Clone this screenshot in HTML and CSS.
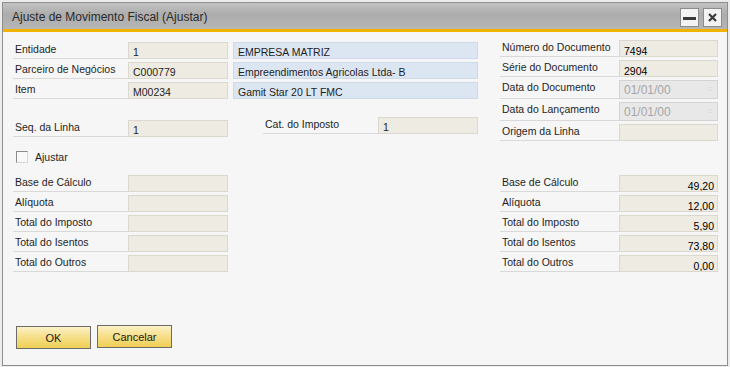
FILE: index.html
```html
<!DOCTYPE html>
<html lang="pt">
<head>
    <meta charset="UTF-8">
    <meta name="viewport" content="width=device-width, initial-scale=1.0">
    <title>Ajuste de Movimento Fiscal (Ajustar)</title>
    <link rel="stylesheet" href="styles.css">
</head>
<body>
    <div class="window">
        <div class="titlebar">
            <span class="title">Ajuste de Movimento Fiscal (Ajustar)</span>
            <div class="title-buttons">
                <button class="tbtn" title="Minimizar">
                    <svg width="17" height="17" viewBox="0 0 17 17"><rect x="2" y="8" width="13" height="3" fill="#3a3a3a"/></svg>
                </button>
                <button class="tbtn" title="Fechar">
                    <svg width="17" height="17" viewBox="0 0 17 17"><path d="M5 5 L12 12 M12 5 L5 12" stroke="#3a3a3a" stroke-width="2.2"/></svg>
                </button>
            </div>
        </div>

        <div class="content">
            <div class="top">
                <div class="col-left">
                    <div class="row">
                        <span class="lbl">Entidade</span>
                        <div class="fld">1</div>
                        <div class="fld wide blue">EMPRESA MATRIZ</div>
                    </div>
                    <div class="row">
                        <span class="lbl">Parceiro de Negócios</span>
                        <div class="fld">C000779</div>
                        <div class="fld wide blue">Empreendimentos Agricolas Ltda- B</div>
                    </div>
                    <div class="row">
                        <span class="lbl">Item</span>
                        <div class="fld">M00234</div>
                        <div class="fld wide blue">Gamit Star 20 LT FMC</div>
                    </div>

                    <div class="row-mid">
                        <div class="pair seq">
                            <span class="lbl">Seq. da Linha</span>
                            <div class="fld">1</div>
                        </div>
                        <div class="pair cat">
                            <span class="lbl">Cat. do Imposto</span>
                            <div class="fld">1</div>
                        </div>
                    </div>

                    <label class="check">
                        <span class="box"></span>
                        <span>Ajustar</span>
                    </label>
                </div>

                <div class="col-right">
                    <div class="row">
                        <span class="lbl">Número do Documento</span>
                        <div class="fld dark">7494</div>
                    </div>
                    <div class="row">
                        <span class="lbl">Série do Documento</span>
                        <div class="fld dark">2904</div>
                    </div>
                    <div class="row tall">
                        <span class="lbl">Data do Documento</span>
                        <div class="fld date">01/01/00<span class="dots">::</span></div>
                    </div>
                    <div class="row tall">
                        <span class="lbl">Data do Lançamento</span>
                        <div class="fld date">01/01/00<span class="dots">::</span></div>
                    </div>
                    <div class="row">
                        <span class="lbl">Origem da Linha</span>
                        <div class="fld"></div>
                    </div>
                </div>
            </div>

            <div class="totals">
                <div class="block">
                    <div class="row"><span class="lbl">Base de Cálculo</span><div class="fld"></div></div>
                    <div class="row"><span class="lbl">Alíquota</span><div class="fld"></div></div>
                    <div class="row"><span class="lbl">Total do Imposto</span><div class="fld"></div></div>
                    <div class="row"><span class="lbl">Total do Isentos</span><div class="fld"></div></div>
                    <div class="row"><span class="lbl">Total do Outros</span><div class="fld"></div></div>
                </div>
                <div class="block right">
                    <div class="row"><span class="lbl">Base de Cálculo</span><div class="fld num">49,20</div></div>
                    <div class="row"><span class="lbl">Alíquota</span><div class="fld num">12,00</div></div>
                    <div class="row"><span class="lbl">Total do Imposto</span><div class="fld num">5,90</div></div>
                    <div class="row"><span class="lbl">Total do Isentos</span><div class="fld num">73,80</div></div>
                    <div class="row"><span class="lbl">Total do Outros</span><div class="fld num">0,00</div></div>
                </div>
            </div>

            <div class="actions">
                <button class="btn ok">OK</button>
                <button class="btn">Cancelar</button>
            </div>
        </div>
    </div>
</body>
</html>
```

FILE: styles.css
```css
* {
    box-sizing: border-box;
}

body {
    margin: 0;
    background-color: #ececec;
    font-family: "Liberation Sans", Arial, sans-serif;
    font-size: 10.5px;
    color: #1e1e1e;
}

.window {
    margin: 2px 0 0 2px;
    width: 726px;
    height: 364px;
    border: 1px solid #8e8e8e;
    background-color: #f6f6f6;
}

.titlebar {
    height: 29px;
    display: flex;
    align-items: center;
    justify-content: space-between;
    padding: 0 5px 0 9px;
    background: linear-gradient(#c2c2c2, #acacac 45%, #b6b6b6);
    border-bottom: 3px solid #f2b200;
}

.title {
    font-size: 12px;
    color: #2a2a2a;
    margin-top: 1px;
}

.title-buttons {
    display: flex;
    gap: 4px;
    margin-top: 3px;
}

.tbtn {
    width: 19px;
    height: 19px;
    padding: 0;
    border: 1px solid #8c8c8c;
    background-color: #f3f3f3;
    display: flex;
    align-items: center;
    justify-content: center;
}

.content {
    padding: 10px 9px 0 10px;
}

.top {
    display: flex;
    gap: 22px;
    align-items: flex-start;
}

.col-left,
.col-right,
.block {
    display: flex;
    flex-direction: column;
    gap: 3px;
}

.col-right {
    margin-top: -2px;
}

.row {
    display: flex;
    height: 17px;
}

.row.tall {
    height: 19px;
}

.lbl {
    width: 115px;
    padding: 1px 0 0 2px;
    border-bottom: 1px solid #d9d9d9;
    line-height: 12px;
    white-space: nowrap;
}

.fld {
    width: 100px;
    border: 1px solid #dad8cf;
    background-color: #eeebe2;
    padding: 3px 4px 0;
    line-height: 12px;
    white-space: nowrap;
    overflow: hidden;
}

.fld.wide {
    width: 245px;
    margin-left: 5px;
}

.fld.blue {
    background-color: #dce6f2;
    border-color: #cddaea;
}

.fld.dark {
    color: #000;
    padding-top: 4px;
}

.fld.date {
    position: relative;
    background-color: #e8e8e8;
    border-color: #d3d3d3;
    color: #a6a6a6;
    font-size: 12px;
    padding-top: 3px;
}

.dots {
    position: absolute;
    right: 4px;
    top: 2px;
    font-size: 8px;
    color: #c4c4c4;
}

.col-right .lbl {
    width: 119px;
}

.col-right .fld,
.block.right .fld {
    width: 99px;
}

.row-mid {
    display: flex;
    align-items: flex-start;
    gap: 35px;
    margin-top: 15px;
}

.pair {
    display: flex;
    height: 17px;
}

.pair.seq {
    margin-top: 3px;
}

.check {
    display: flex;
    align-items: center;
    gap: 7px;
    margin: 10px 0 0 3px;
    height: 14px;
}

.box {
    width: 12px;
    height: 12px;
    border: 1px solid #8a8a8a;
    border-right-color: #d6d6d6;
    border-bottom-color: #d6d6d6;
    background-color: #f8f8f8;
}

.totals {
    display: flex;
    justify-content: space-between;
    margin-top: 11px;
}

.block.right .lbl {
    width: 119px;
}

.fld.num {
    text-align: right;
    padding-right: 3px;
    padding-top: 4px;
    color: #000;
}

.actions {
    display: flex;
    align-items: flex-start;
    gap: 6px;
    margin: 53px 0 0 3px;
}

.btn {
    width: 75px;
    height: 23px;
    padding: 0;
    border: 1px solid #6b6b6b;
    background: linear-gradient(#fbf2c6, #f6e08c 45%, #f0cf55);
    font-family: "Liberation Sans", Arial, sans-serif;
    font-size: 11px;
    color: #1a1a1a;
}

.btn.ok {
    margin-top: 1px;
}
```
